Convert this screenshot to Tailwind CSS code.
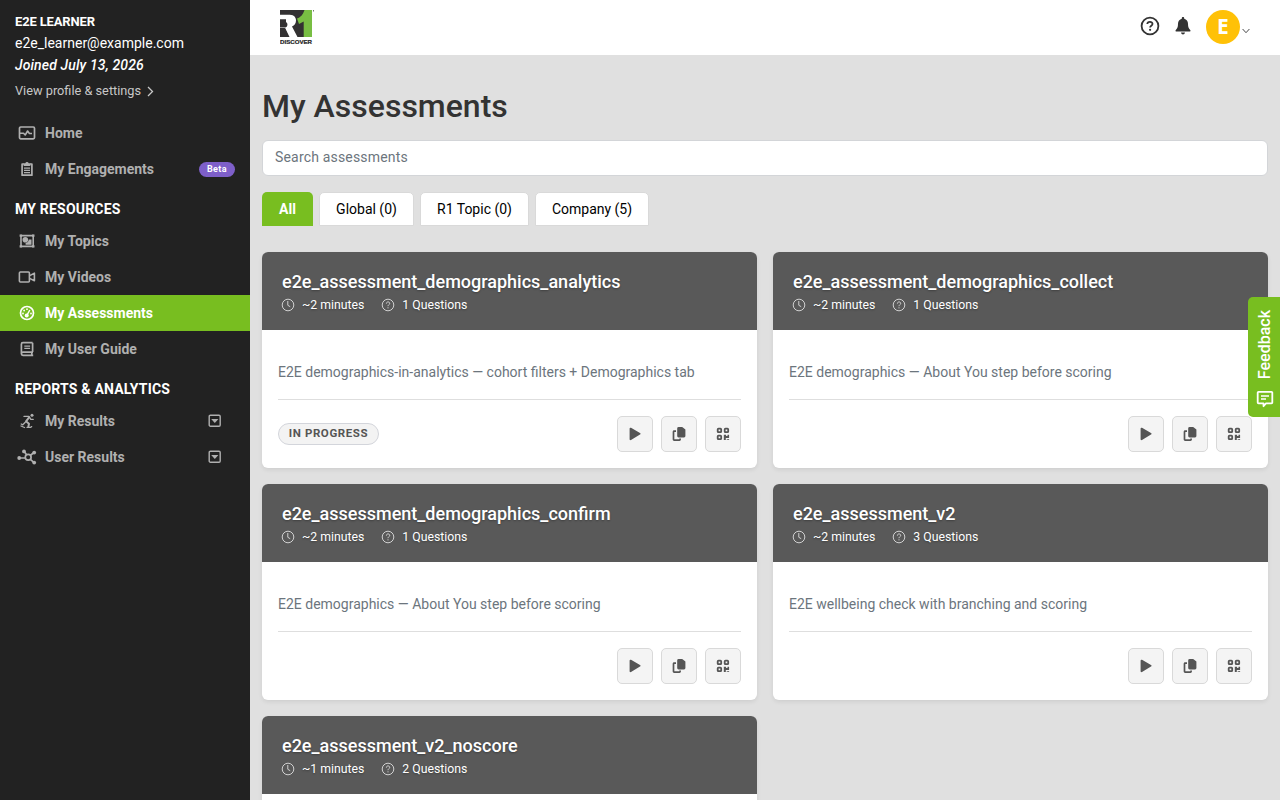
<!DOCTYPE html>
<html lang="en">
<head>
  <meta charset="UTF-8" />
  <meta name="viewport" content="width=device-width, initial-scale=1.0"/>
  <title>My Assessments - R1 Discover</title>

  <!-- Tailwind CSS -->
  <script src="https://cdn.jsdelivr.net/npm/@tailwindcss/browser@4"></script>
</head>
<body class="bg-[#e0e0e0] text-[#212529] font-['Roboto',sans-serif] text-sm h-screen overflow-hidden flex">

<!-- Icons -->
<svg class="hidden">
  <symbol id="i-home" viewBox="0 0 18 16"><g fill="none" stroke="currentColor" stroke-width="1.700" stroke-linejoin="round"><rect x="1.500" y="2" width="15" height="11.800" rx="1.200"/><path stroke-width="1.600" d="M2 8.300h3.600L7.200 10l2.400-4 1.800 2.500H14"/></g></symbol>
  <symbol id="i-clip" viewBox="0 0 18 16"><path fill="none" stroke="currentColor" stroke-width="1.700" stroke-linejoin="round" d="M6 3H4.100v11.200h9.800V3H12"/><path fill="currentColor" d="M5.600 5V2.200h1.700a1.800 1.800 0 0 1 3.400 0h1.700V5z"/><path stroke="currentColor" stroke-width="1.300" d="M6 7.200h6M6 9.400h6M6 11.600h6"/></symbol>
  <symbol id="i-topics" viewBox="0 0 18 16"><path fill="none" stroke="currentColor" stroke-width="1.600" d="M3 2.600h12.200v10.800H3z"/><path fill="currentColor" d="M1.600 1.400h2.500v2.400H1.600zM14 1.400h2.500v2.400H14zM1.600 12.200h2.500v2.400H1.600zM14 12.200h2.500v2.400H14zM10.700 6.600h2.800v5.200H7.600V10a3.500 3.500 0 0 0 3.100-3.400z"/><circle cx="7.300" cy="6.800" r="2.800" fill="currentColor"/></symbol>
  <symbol id="i-video" viewBox="0 0 18 16"><g fill="none" stroke="currentColor" stroke-width="1.600" stroke-linejoin="round"><rect x="1.400" y="3" width="10" height="10" rx="1"/><path d="M11.600 6.600 16.400 4.200v7.600l-4.800-2.400"/></g></symbol>
  <symbol id="i-gauge" viewBox="0 0 18 16"><circle cx="9" cy="8" r="6.500" fill="none" stroke="currentColor" stroke-width="1.700"/><g fill="currentColor"><circle cx="5" cy="8.500" r=".9"/><circle cx="6.100" cy="5.500" r=".9"/><circle cx="9" cy="4.200" r=".9"/><circle cx="13" cy="8.500" r=".9"/><circle cx="8.700" cy="10.600" r="2"/></g><path stroke="currentColor" stroke-width="1.400" d="m9 10.200 2.800-5.200"/></symbol>
  <symbol id="i-book" viewBox="0 0 18 16"><path fill="none" stroke="currentColor" stroke-width="1.700" stroke-linejoin="round" d="M14.600 1.700H4.900a1.500 1.500 0 0 0-1.500 1.500v9.500a1.600 1.600 0 0 0 1.600 1.600h10.200M14.600 1.700v9.400M15 11.100H5a1.500 1.500 0 0 0-1.500 1.500M13.800 11.200v3"/><path stroke="currentColor" stroke-width="1.400" d="M6.300 5.100h5.800M6.300 7.400h5.800"/></symbol>
  <symbol id="i-run" viewBox="0 0 18 16"><circle cx="14" cy="2.200" r="1.500" fill="currentColor"/><g fill="none" stroke="currentColor" stroke-width="1.300" stroke-linecap="round" stroke-linejoin="round"><path d="M6 3.400h4.800l2 3h2.400"/><path stroke-width="2" d="M11.300 4.200 8 8.300l3 2.400-.6 2.800"/><path d="M7.300 9.200 4.800 11.800 3.200 11M3 13l3.500 1.500M9 14.300h3.800l.9-.7"/></g></symbol>
  <symbol id="i-nodes" viewBox="0 0 20 16"><g fill="none" stroke="currentColor" stroke-width="1.700"><circle cx="11.200" cy="8.200" r="2.900"/><path d="M2.500 9h5.800M9.600 5.800 7.200 2.600M13.400 6.300l3.400-2.500M13.400 10.300l3.400 3"/></g><g fill="currentColor"><circle cx="2.200" cy="9" r="1.900"/><circle cx="7" cy="2.400" r="1.900"/><circle cx="17.200" cy="3.600" r="1.900"/><circle cx="17.200" cy="13.600" r="1.900"/></g></symbol>
  <symbol id="i-drop" viewBox="0 0 14 14"><rect x="1.200" y="1.200" width="11" height="11" rx="1.200" fill="none" stroke="currentColor" stroke-width="1.400"/><path fill="currentColor" d="M3.200 5h7.200L6.800 9z"/></symbol>
  <symbol id="i-clock" viewBox="0 0 14 14"><g fill="none" stroke="currentColor" stroke-width=".9"><circle cx="7" cy="7" r="5.800"/><path d="M6.800 3v4.300l2.400 1.400"/></g></symbol>
  <symbol id="i-help" viewBox="0 0 14 14"><g fill="none" stroke="currentColor" stroke-width=".9"><circle cx="7" cy="7" r="5.800"/><path d="M5.400 5.600C5.400 3.300 8.700 3.500 8.700 5.400 8.700 6.700 7 6.600 7 8.200"/></g><circle cx="7" cy="9.800" r=".6" fill="currentColor"/></symbol>
  <symbol id="i-play" viewBox="0 0 16 16"><path fill="currentColor" d="M2.600 2.600c0-.8.700-1.200 1.400-.8l9 5.200c.7.400.7 1.200 0 1.600l-9 5.400c-.7.400-1.400 0-1.400-.8z"/></symbol>
  <symbol id="i-copy" viewBox="0 0 16 16"><path fill="currentColor" d="M7.600 1h3.600l3.200 2.600v6.500a1.400 1.400 0 0 1-1.400 1.400H7.600a1.400 1.400 0 0 1-1.400-1.400V2.400A1.400 1.400 0 0 1 7.600 1z"/><path fill="none" stroke="currentColor" stroke-width="1.700" d="M5 5.200H3.100a.6.600 0 0 0-.6.600v7.700c0 .4.200.6.600.6H8.500c.4 0 .6-.2.600-.6v-1"/></symbol>
  <symbol id="i-qr" viewBox="0 0 16 16"><g fill="none" stroke="currentColor" stroke-width="1.800"><rect x="2.700" y="2.700" width="3.500" height="3.500" rx=".8"/><rect x="9.700" y="2.700" width="3.500" height="3.500" rx=".8"/><rect x="2.700" y="9.700" width="3.500" height="3.500" rx=".8"/></g><path fill="currentColor" d="M8.800 8.800h2.300v1.200h1.400V8.800h1.600v3.200h-3.300v2.100h-2zM11.800 13h.9v1h-.9zM13.200 13h.9v1h-.9z"/></symbol>
</svg>

<!-- Sidebar -->
<aside class="w-[250px] shrink-0 h-full bg-[#222] text-white">
  <div class="px-[15px] pt-[11px] leading-[22px]">
    <p class="text-[13px] leading-[21px] font-bold tracking-[-0.15px]">E2E LEARNER</p>
    <p>e2e_learner@example.com</p>
    <p class="italic font-medium tracking-[0.14px]">Joined July 13, 2026</p>
    <a href="#" class="flex items-center gap-1.5 mt-[5px] text-[12.75px] leading-5 text-[#c8c8c8]">View profile &amp; settings
      <svg class="w-[7px] h-[11px]" viewBox="0 0 7 11" fill="none" stroke="currentColor" stroke-width="1.300"><path d="m1 1 4.500 4.500L1 10"/></svg>
    </a>
  </div>
  <nav class="mt-[14px] font-bold text-[#b0b0b0]">
    <a href="#" class="flex items-center h-9 px-[15px]"><svg class="w-6 h-4 mr-1.5"><use href="#i-home"/></svg>Home</a>
    <a href="#" class="flex items-center h-9 px-[15px]"><svg class="w-6 h-4 mr-1.5"><use href="#i-clip"/></svg>My Engagements
      <span class="ml-auto h-[15px] w-9 rounded-full bg-[#7e5fc9] text-white text-[9px] leading-[14px] tracking-[0.4px] text-center">Beta</span></a>
    <h2 class="px-[15px] h-9 pt-1 leading-9 tracking-[0.2px] text-white">MY RESOURCES</h2>
    <a href="#" class="flex items-center h-9 px-[15px]"><svg class="w-6 h-4 mr-1.5"><use href="#i-topics"/></svg>My Topics</a>
    <a href="#" class="flex items-center h-9 px-[15px]"><svg class="w-6 h-4 mr-1.5"><use href="#i-video"/></svg>My Videos</a>
    <a href="#" class="flex items-center h-9 px-[15px] bg-[#78be20] text-white"><svg class="w-6 h-4 mr-1.5"><use href="#i-gauge"/></svg>My Assessments</a>
    <a href="#" class="flex items-center h-9 px-[15px]"><svg class="w-6 h-4 mr-1.5"><use href="#i-book"/></svg>My User Guide</a>
    <h2 class="px-[15px] h-9 pt-1 leading-9 tracking-[0.2px] text-white">REPORTS &amp; ANALYTICS</h2>
    <a href="#" class="flex items-center h-9 pl-[15px] pr-7"><svg class="w-6 h-4 mr-1.5"><use href="#i-run"/></svg>My Results<svg class="w-3.5 h-3.5 ml-auto"><use href="#i-drop"/></svg></a>
    <a href="#" class="flex items-center h-9 pl-[15px] pr-7"><svg class="w-6 h-4 mr-1.5"><use href="#i-nodes"/></svg>User Results<svg class="w-3.5 h-3.5 ml-auto"><use href="#i-drop"/></svg></a>
  </nav>
</aside>

<div class="flex-1 min-w-0">
  <!-- Top bar -->
  <header class="h-[55px] bg-white flex items-start justify-between pl-[30px] pr-[30px]">
    <svg class="w-[35px] h-[37px] mt-[9px]" viewBox="0 0 35 37">
      <path fill="#333132" d="M0 1h32v27H0z"/>
      <path fill="#fff" d="M0 5.500h8c5 0 8 2 8 6 0 3-1.500 5-4 6l5.500 10.500h-8L5 18.700V28H0v-9.500h5c3 0 3.500-5.500 0-5.500H0z"/>
      <path fill="#333132" d="M0 1h11v4.500H0zM0 10.200h6v5H0zM0 19h4.800l3.800 9H0z"/>
      <path fill="#78be43" d="M17 9.500c4-1.500 6-4 7.500-8.500H32v27h-8.300V12.500l-4.700 2.500z"/>
      <path fill="#777" d="M33 1h1v1.500h-1z"/>
      <text x="0" y="35.300" textLength="32" lengthAdjust="spacingAndGlyphs" font-family="Liberation Sans, sans-serif" font-size="5.600" font-weight="bold" fill="#222" stroke="#222" stroke-width=".2">DISCOVER</text>
    </svg>
    <div class="flex items-center pt-[9px] text-[#333]">
      <svg class="w-5 h-5 mr-[15px] -mt-0.5" viewBox="0 0 20 20" fill="none" stroke="currentColor" stroke-width="1.800"><circle cx="10" cy="10" r="8.400"/><path d="M7.300 8C7.500 5.100 12.700 5.300 12.500 8c-.1 1.700-2.400 1.700-2.400 3.500"/><circle cx="10.100" cy="13.800" r="1.100" fill="currentColor" stroke="none"/></svg>
      <svg class="w-4 h-[18px] mr-[15px] -mt-px" viewBox="0 0 16 18" fill="currentColor"><path d="M8 0c.8 0 1.200.5 1.200 1.200v.6c2.300.6 3.800 2.500 3.800 5 0 3.300.7 4.700 2.200 6.200.6.600.3 1.600-.7 1.600h-13c-1 0-1.300-1-.7-1.600C2.300 11.500 3 10.100 3 6.800c0-2.500 1.500-4.400 3.800-5v-.6C6.800.5 7.200 0 8 0zM6 15.600h4c-.2 1.200-1 1.900-2 1.900s-1.800-.7-2-1.900z"/></svg>
      <div class="w-[34px] h-[34px] mt-px rounded-full bg-[#ffc107] text-white text-[21px] font-bold font-['Open_Sans',sans-serif] leading-[33px] text-center">E</div>
      <svg class="w-2 h-1.5 ml-0.5 mt-[9px]" viewBox="0 0 8 6" fill="none" stroke="currentColor" stroke-width=".9"><path d="m.6 1 3.400 3.700L7.400 1"/></svg>
    </div>
  </header>

  <main class="px-3 pt-8">
    <h1 class="text-[32px] leading-[38px] font-medium text-[#333]">My Assessments</h1>
    <input type="text" placeholder="Search assessments" class="block w-full h-9 mt-[15px] px-3 pb-0.5 rounded-md border border-[#d3d5d8] bg-white text-sm tracking-[0.18px] placeholder:text-[#6c757d]"/>

    <!-- Filter tabs -->
    <div class="flex items-start gap-1.5 mt-4 h-[34px] text-black">
      <button class="h-[34px] w-[51px] rounded-t-[5px] bg-[#78be20] text-white font-bold">All</button>
      <button class="h-[34px] w-[95px] rounded-t-[5px] bg-white border border-[#d9d9d9]">Global (0)</button>
      <button class="h-[34px] w-[109px] rounded-t-[5px] bg-white border border-[#d9d9d9]">R1 Topic (0)</button>
      <button class="h-[34px] w-[114px] rounded-t-[5px] bg-white border border-[#d9d9d9]">Company (5)</button>
    </div>

    <div id="cards" class="grid grid-cols-2 gap-4 mt-[26px]"></div>
  </main>
</div>

<!-- Feedback tab -->
<button class="fixed right-0 top-[297px] w-8 h-[120px] rounded-l-[5px] bg-[#78be20] text-white flex flex-col items-center justify-end gap-[11px] pb-[9px] pl-0.5">
  <span class="[writing-mode:vertical-rl] rotate-180 text-base leading-5 font-medium">Feedback</span>
  <svg class="w-[18px] h-[18px]" viewBox="0 0 18 18" fill="none" stroke="currentColor" stroke-width="1.800" stroke-linejoin="round"><path d="M2.500 1.800h13a.8.800 0 0 1 .8.800v10a.8.800 0 0 1-.8.800H10l-2.500 2.800v-2.800h-5a.8.800 0 0 1-.8-.8v-10a.8.800 0 0 1 .8-.8z"/><path stroke-width="1.600" d="M5 6h8M5 9h5"/></svg>
</button>

<script>
  const assessments = [
    { title: "e2e_assessment_demographics_analytics", minutes: 2, questions: 1, text: "E2E demographics-in-analytics — cohort filters + Demographics tab", inProgress: true },
    { title: "e2e_assessment_demographics_collect", minutes: 2, questions: 1, text: "E2E demographics — About You step before scoring" },
    { title: "e2e_assessment_demographics_confirm", minutes: 2, questions: 1, text: "E2E demographics — About You step before scoring" },
    { title: "e2e_assessment_v2", minutes: 2, questions: 3, text: "E2E wellbeing check with branching and scoring" },
    { title: "e2e_assessment_v2_noscore", minutes: 1, questions: 2, text: "" }
  ];

  const button = icon => `
    <button class="w-9 h-9 rounded-[5px] border border-[#d9d9d9] bg-[#f4f4f4] text-[#555] flex items-center justify-center"><svg class="w-4 h-4"><use href="#${icon}"/></svg></button>`;

  document.getElementById("cards").innerHTML = assessments.map(a => `
    <article class="h-[216px] rounded-md bg-white shadow-[0_2px_4px_rgba(0,0,0,0.08)] overflow-hidden">
      <div class="h-[78px] bg-[#595959] text-white px-5 pt-[18px] [text-shadow:0_1px_2px_rgba(0,0,0,0.3)]">
        <h3 class="text-lg leading-6 font-medium">${a.title}</h3>
        <div class="flex items-center text-[12.25px] leading-[22px]">
          <svg class="w-3.5 h-3.5 -ml-px mr-[7px] opacity-80"><use href="#i-clock"/></svg><span class="mr-[17px]">~${a.minutes} minutes</span>
          <svg class="w-3.5 h-3.5 mr-[7px] opacity-80"><use href="#i-help"/></svg><span>${a.questions} Questions</span>
        </div>
      </div>
      <div class="px-4">
        <p class="h-[70px] pt-8 leading-[21px] text-[#6c757d] border-b border-[#dedede]">${a.text}</p>
        <div class="flex items-center gap-2 pt-4">
          ${a.inProgress ? '<span class="h-[22px] w-[101px] rounded-full border border-[#d3d5db] bg-[#f3f3f3] text-[#555] text-[11.5px] leading-[19px] font-bold tracking-[0.6px] text-center">IN PROGRESS</span>' : ""}
          <div class="flex gap-2 ml-auto">${button("i-play")}${button("i-copy")}${button("i-qr")}</div>
        </div>
      </div>
    </article>`).join("");
</script>

</body>
</html>
